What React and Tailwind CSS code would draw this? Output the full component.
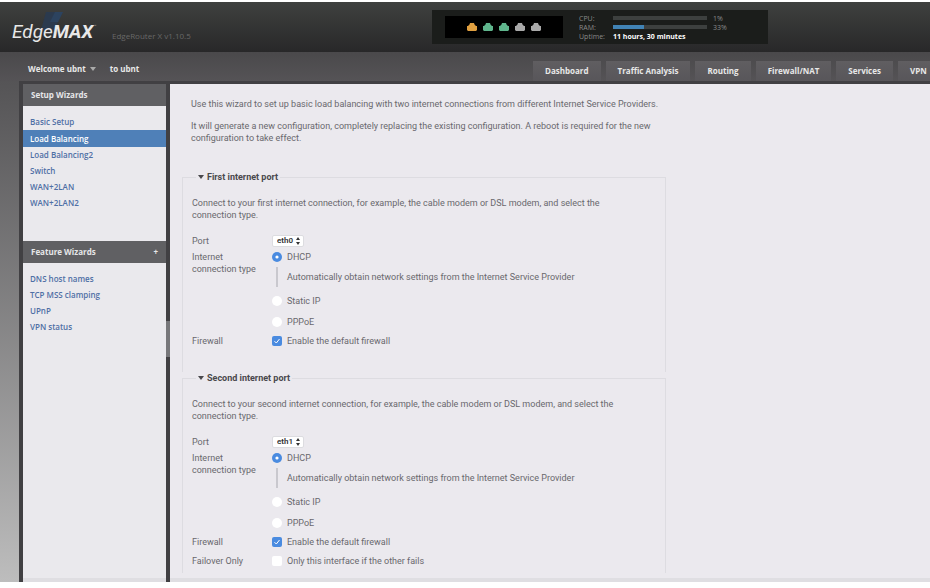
import clsx from 'clsx';
import { useState } from 'react';

const tabs = ['Dashboard', 'Traffic Analysis', 'Routing', 'Firewall/NAT', 'Services', 'VPN'];

const setupWizards = ['Basic Setup', 'Load Balancing', 'Load Balancing2', 'Switch', 'WAN+2LAN', 'WAN+2LAN2'];

const featureWizards = ['DNS host names', 'TCP MSS clamping', 'UPnP', 'VPN status'];

const ledColors = ['text-[#e0a040]', 'text-[#5fb58c]', 'text-[#5fb58c]', 'text-[#a9a9a9]', 'text-[#a9a9a9]'];

function Logo() {
    return (
        <a href="#home" className="relative block w-[88px] text-[#e8e8e8]">
            <svg viewBox="0 0 28 22" className="absolute -top-[10px] left-7 h-[22px] w-7" aria-hidden="true">
                <path d="M6 2h17l-9 18H1z" fill="#2b3a4e" />
                <path d="M15 2h8l-5 10h-8z" fill="#2c435f" />
            </svg>
            <span className="relative flex items-start font-[Roboto,sans-serif] text-[19px] leading-6 italic">
                Edge<b>MAX</b>
                <span className="text-[5px] leading-3 text-[#9a9a9a]">™</span>
            </span>
        </a>
    );
}

function PortLed({ color }) {
    return (
        <svg viewBox="0 0 10 8" className={clsx('h-2 w-[10px]', color)} fill="currentColor" aria-hidden="true">
            <path d="M3 0h4l.5 1.500 1.500 1.500h1v4l-1 1h-8l-1-1v-4h1l1.500-1.500z" />
        </svg>
    );
}

function Meter({ label, value }) {
    return (
        <>
            <span>{label}</span>
            <span className="h-1 bg-[#3d403f]">
                <span className="block h-1 bg-[#4183b5]" style={{ width: `${value > 5 ? value : 0}%` }} />
            </span>
            <span>{`${value}%`}</span>
        </>
    );
}

function Header() {
    return (
        <header className="flex h-[50px] shrink-0 items-start bg-linear-to-b from-[#3f413f] to-[#282829] pl-3">
            <div className="mt-[18px] flex w-[420px] shrink-0 items-center gap-3">
                <Logo />
                <span className="pt-2 text-[8px] leading-3 text-[#686868]">EdgeRouter X v1.10.5</span>
            </div>
            <div className="mt-2 flex h-[34px] w-[336px] shrink-0 items-center bg-[#1b1d1b] pl-[13px]">
                <div className="flex h-[22px] w-[118px] items-center justify-center gap-[6px] bg-black">
                    {ledColors.map((color, i) => (
                        <PortLed key={i} color={color} />
                    ))}
                </div>
                <div className="ml-4 grid grid-cols-[34px_94px_20px] items-center text-[7px] leading-[9px] text-[#8a8a8a] [&>span:nth-child(3n)]:pl-[6px]">
                    <Meter label="CPU:" value={1} />
                    <Meter label="RAM:" value={33} />
                    <span>Uptime:</span>
                    <b className="text-white">11 hours, 30 minutes</b>
                </div>
            </div>
        </header>
    );
}

function TopBar() {
    return (
        <div className="flex h-[29px] shrink-0 items-start bg-linear-to-b from-[#4a494b] to-[#555356] text-[8px] font-bold text-[#e8e8e8]">
            <div className="flex w-[533px] shrink-0 items-center pt-[11px] pl-7 leading-3">
                <button className="flex items-center gap-1">
                    Welcome ubnt
                    <svg viewBox="0 0 6 4" className="h-1 w-[6px]" fill="#aaaaaa" aria-hidden="true">
                        <path d="M0 0h6L3 4z" />
                    </svg>
                </button>
                <span className="ml-[14px]">to ubnt</span>
            </div>
            <nav className="flex min-w-0 flex-1 gap-[5px] overflow-hidden pt-[9px]">
                {tabs.map((tab) => (
                    <a
                        key={tab}
                        href="#tab"
                        className="h-5 shrink-0 bg-linear-to-b from-[#605e61] to-[#58565a] px-3 leading-5"
                    >
                        {tab}
                    </a>
                ))}
            </nav>
        </div>
    );
}

function WizardList({ title, items, selected, onSelect, children }) {
    return (
        <section>
            <h2 className="flex h-[22px] items-center justify-between bg-[#606063] px-2 text-[8px] font-bold text-[#e6e6e8]">
                {title}
                {children}
            </h2>
            <ul className="pt-2 pb-[30px]">
                {items.map((item) => (
                    <li key={item}>
                        <a
                            href="#wizard"
                            onClick={() => onSelect(item)}
                            className={clsx(
                                'block px-[7px] text-[8px] font-semibold',
                                item === selected ? 'bg-[#4f80b8] leading-[17px] text-white' : 'leading-4 text-[#4f6fa5]'
                            )}
                        >
                            {item}
                        </a>
                    </li>
                ))}
            </ul>
        </section>
    );
}

function Sidebar() {
    const [selected, setSelected] = useState('Load Balancing');

    return (
        <aside className="relative flex w-[151px] shrink-0 flex-col border-x-4 border-[#414043] bg-[#eae9ed]">
            <WizardList title="Setup Wizards" items={setupWizards} selected={selected} onSelect={setSelected} />
            <WizardList title="Feature Wizards" items={featureWizards} selected={selected} onSelect={setSelected}>
                <button aria-label="Add wizard">+</button>
            </WizardList>
            <span className="absolute top-[237px] -right-1 h-9 w-1 bg-[#77777a]" />
            <div className="mt-auto h-1 bg-[#dfdee2]" />
        </aside>
    );
}

function Option({ type = 'radio', name, label, checked }) {
    return (
        <label className="flex items-center gap-[5px]">
            <span className="relative flex">
                <input
                    type={type}
                    name={name}
                    defaultChecked={checked}
                    className={clsx(
                        'peer size-[10px] shrink-0 appearance-none bg-white checked:bg-[#4a8be0]',
                        type === 'radio' ? 'rounded-full' : 'rounded-[2px]'
                    )}
                />
                <svg
                    viewBox="0 0 10 10"
                    className="pointer-events-none absolute inset-0 hidden size-[10px] text-white peer-checked:block"
                    fill="none"
                    aria-hidden="true"
                >
                    {type === 'radio' ? (
                        <circle cx="5" cy="5" r="1.600" fill="currentColor" />
                    ) : (
                        <path d="M2.500 5.200l1.800 1.800 3.200-4" stroke="currentColor" />
                    )}
                </svg>
            </span>
            {label}
        </label>
    );
}

function PortSettings({ id, title, ordinal, port, failover }) {
    return (
        <fieldset className="h-[201px] w-full max-w-[484px] border border-b-0 border-[#dddce1] px-[9px]">
            <legend className="ml-1 flex items-center gap-[3px] px-[2px] text-[9px] leading-3 font-bold text-[#49484c]">
                <svg viewBox="0 0 6 4" className="h-1 w-[6px]" fill="currentColor" aria-hidden="true">
                    <path d="M0 0h6L3 4z" />
                </svg>
                {title}
            </legend>
            <p className="mt-[14px] max-w-[436px]">
                {`Connect to your ${ordinal} internet connection, for example, the cable modem or DSL modem, and select the connection type.`}
            </p>
            <div className="mt-3 grid grid-cols-[80px_1fr]">
                <label htmlFor={`${id}-port`} className="leading-4">
                    Port
                </label>
                <span className="relative flex h-4 w-8 items-center">
                    <select
                        id={`${id}-port`}
                        className="h-3 w-8 appearance-none rounded-[2px] border border-[#dcdce0] bg-white pl-1 text-[8px] leading-[10px] font-semibold text-[#333333]"
                    >
                        <option>{port}</option>
                    </select>
                    <svg
                        viewBox="0 0 4 8"
                        className="pointer-events-none absolute right-1 h-2 w-1"
                        fill="#333333"
                        aria-hidden="true"
                    >
                        <path d="M0 3l2-3 2 3zM0 5l2 3 2-3z" />
                    </svg>
                </span>
                <span className="w-[70px] pt-[2px]">Internet connection type</span>
                <div>
                    <div className="pt-[2px]">
                        <Option name={`${id}-type`} label="DHCP" checked />
                    </div>
                    <p className="mt-1 ml-1 border-l-2 border-[#c9c8ce] pl-[9px] leading-5">
                        Automatically obtain network settings from the Internet Service Provider
                    </p>
                    <div className="mt-2 flex flex-col gap-[9px]">
                        <Option name={`${id}-type`} label="Static IP" />
                        <Option name={`${id}-type`} label="PPPoE" />
                    </div>
                </div>
                <span className="mt-[7px]">Firewall</span>
                <div className="mt-[7px]">
                    <Option type="checkbox" label="Enable the default firewall" checked />
                </div>
                {failover && (
                    <>
                        <span className="mt-[7px]">Failover Only</span>
                        <div className="mt-[7px]">
                            <Option type="checkbox" label="Only this interface if the other fails" />
                        </div>
                    </>
                )}
            </div>
        </fieldset>
    );
}

export default function App() {
    return (
        <div className="flex min-h-screen flex-col bg-white pt-[2px] pb-[6px] font-['Open_Sans',sans-serif]">
            <Header />
            <TopBar />
            <div className="flex flex-1 bg-linear-to-b from-[#555456] to-[#bdbdbd] pl-[19px]">
                <div className="flex min-w-0 flex-1 border-t-[3px] border-[#414043]">
                    <Sidebar />
                    <main className="flex min-w-0 flex-1 flex-col bg-[#ebe9ee] font-[Roboto,sans-serif] text-[9px] leading-3 text-[#69686d]">
                        <div className="max-w-[505px] pt-[14px] pl-[21px]">
                            <p>
                                Use this wizard to set up basic load balancing with two internet connections from
                                different Internet Service Providers.
                            </p>
                            <p className="mt-[10px] max-w-[470px]">
                                It will generate a new configuration, completely replacing the existing configuration. A
                                reboot is required for the new configuration to take effect.
                            </p>
                        </div>
                        <div className="mt-[27px] pl-3">
                            <PortSettings id="first" title="First internet port" ordinal="first" port="eth0" />
                            <PortSettings id="second" title="Second internet port" ordinal="second" port="eth1" failover />
                        </div>
                        <div className="mt-auto h-1 bg-[#dfdee2]" />
                    </main>
                </div>
            </div>
        </div>
    );
}
